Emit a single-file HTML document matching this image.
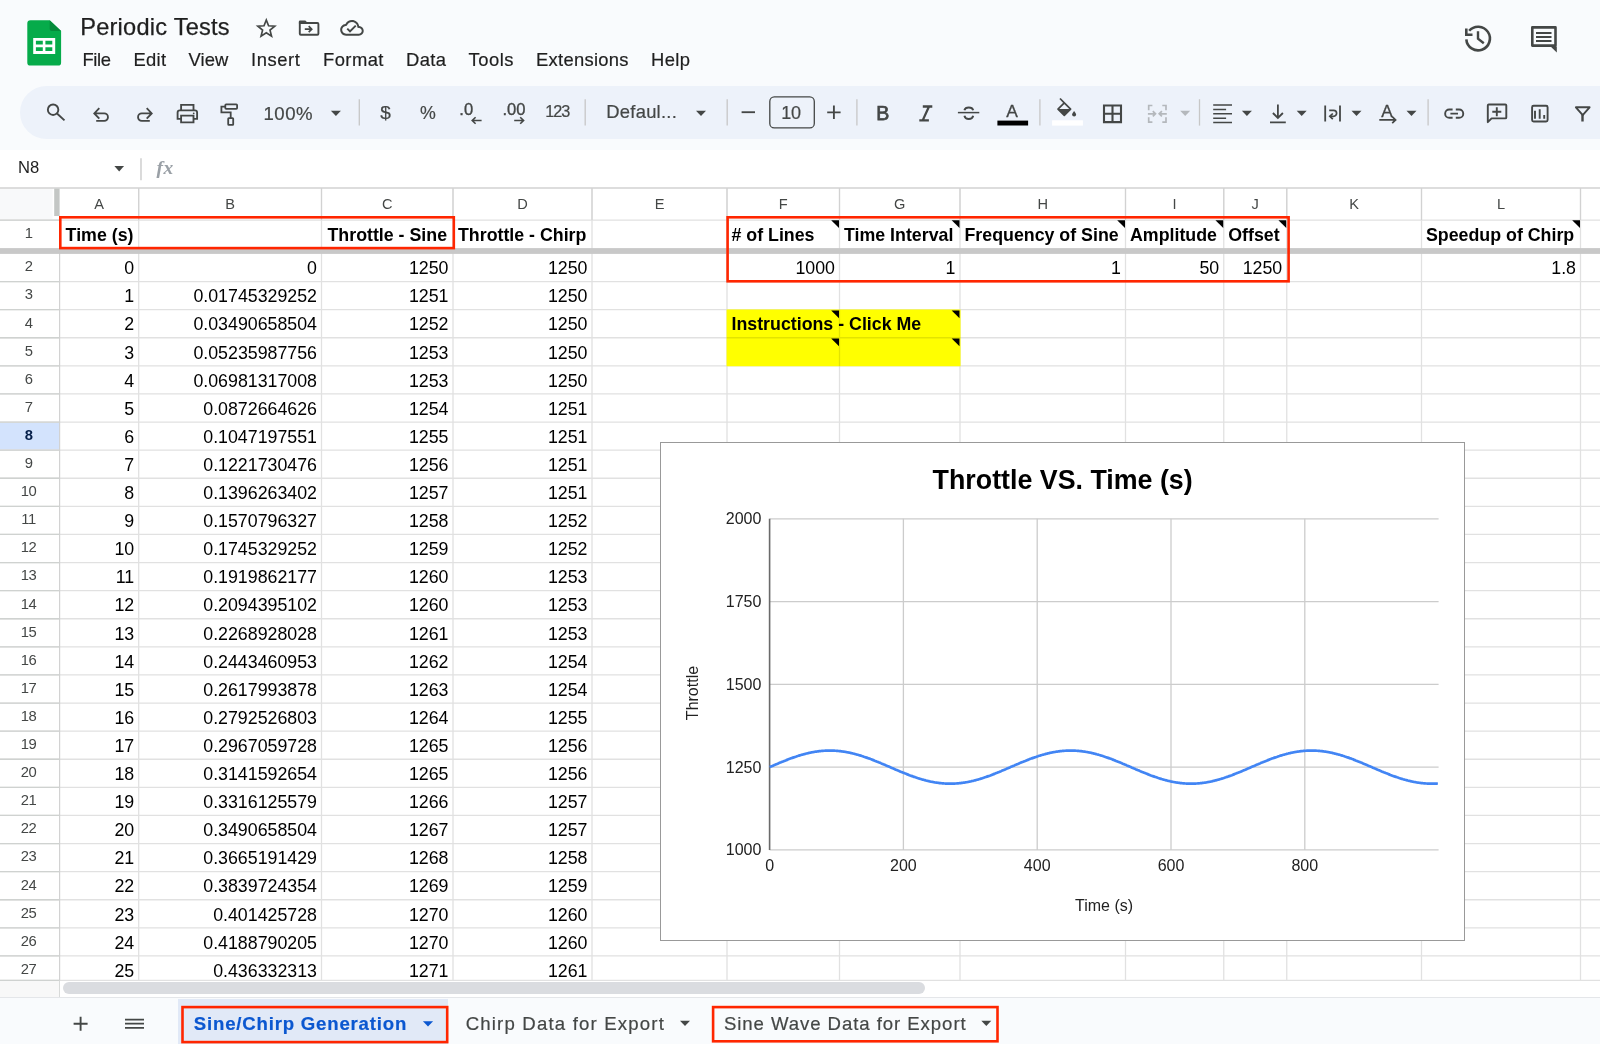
<!DOCTYPE html>
<html><head><meta charset="utf-8"><title>Periodic Tests</title>
<style>
html,body{margin:0;padding:0;overflow:hidden}
body{width:1600px;height:1044px;overflow:hidden;position:relative;background:#f9fbfd;
 font-family:"Liberation Sans",sans-serif;color:#1f1f1f}
.a{position:absolute;white-space:nowrap}
svg{position:absolute;left:0;top:0;overflow:visible}
.menu{position:absolute;top:49px;font-size:18.4px;line-height:22px;color:#1f1f1f;white-space:nowrap;-webkit-text-stroke:.2px #1f1f1f}
.ch{position:absolute;font-size:14.6px;line-height:18px;color:#444746;text-align:center;white-space:nowrap}
.rh{position:absolute;left:0.6px;width:56px;font-size:14.8px;letter-spacing:-.3px;line-height:18px;color:#444746;text-align:center;white-space:nowrap}
.c{position:absolute;font-size:17.8px;line-height:22px;color:#000;white-space:nowrap}
.r{text-align:right}
.b{font-weight:bold}
.tb{position:absolute;font-size:18.4px;line-height:22px;color:#444746;white-space:nowrap;-webkit-text-stroke:.2px #444746}
.ax{position:absolute;font-size:16px;line-height:18px;color:#222;white-space:nowrap}
.tab{position:absolute;top:1012.3px;font-size:18.6px;line-height:24px;color:#444746;white-space:nowrap;-webkit-text-stroke:.2px currentColor}
#root{position:absolute;left:0;top:0;width:1600px;height:1044px;overflow:hidden;will-change:transform}
</style></head><body><div id="root">
<svg width="1600" height="150" viewBox="0 0 1600 150">
<path d="M30.5 20.2h19.2l11.4 10.9v31.300a3.200 3.200 0 0 1-3.200 3.200H30.500a3.200 3.200 0 0 1-3.200-3.200V23.400a3.200 3.200 0 0 1 3.200-3.200z" fill="#06ab4a"/>
<path d="M49.700 20.200l11.400 10.900H51.700a2 2 0 0 1-2-2z" fill="#058a3a"/>
<path d="M33.200 38.100v15.800h22V38.100zm2.700 2.700h6.900v3.800h-6.900zm9.500 0h6.900v3.800h-6.900zm-9.500 6.400h6.900v3.800h-6.900zm9.500 0h6.900v3.800h-6.900z" fill="#fff" fill-rule="evenodd"/>
</svg>
<div class="a" style="left:80.2px;top:11.7px;font-size:23.6px;line-height:30px;color:#1f1f1f;-webkit-text-stroke:.25px #1f1f1f;letter-spacing:0.233px">Periodic Tests</div>
<div class="menu" style="left:82.50px;letter-spacing:-0.388px">File</div>
<div class="menu" style="left:133.50px;letter-spacing:0.277px">Edit</div>
<div class="menu" style="left:188.50px;letter-spacing:0.107px">View</div>
<div class="menu" style="left:251.00px;letter-spacing:0.587px">Insert</div>
<div class="menu" style="left:323.00px;letter-spacing:0.434px">Format</div>
<div class="menu" style="left:406.00px;letter-spacing:0.357px">Data</div>
<div class="menu" style="left:468.50px;letter-spacing:0.517px">Tools</div>
<div class="menu" style="left:536.00px;letter-spacing:0.278px">Extensions</div>
<div class="menu" style="left:651.00px;letter-spacing:0.400px">Help</div>
<div class="a" style="left:20px;top:85.5px;width:1700px;height:53.5px;border-radius:27px;background:#edf2fa"></div>
<div class="a" style="left:0;top:149.5px;width:1600px;height:38px;background:#fff"></div>
<div class="a" style="left:18px;top:158.2px;font-size:16.6px;line-height:20px;color:#1f1f1f">N8</div>
<svg width="1600" height="190" viewBox="0 0 1600 190">
<g fill="none" stroke="#444746" stroke-width="1.9" stroke-linejoin="miter">
<path d="M266.30 20.00L268.59 25.74L274.76 26.15L270.01 30.11L271.53 36.10L266.30 32.80L261.07 36.10L262.59 30.11L257.84 26.15L264.01 25.74z" stroke-width="1.7"/>
<path d="M299.8 22.2v11.600a1 1 0 0 0 1 1h16.600a1 1 0 0 0 1-1V24a1 1 0 0 0-1-1H299.8" stroke-width="1.9"/>
<path d="M298.85 23.6V21.7a1.200 1.200 0 0 1 1.200-1.200h5.300l2.400 2.600z" fill="#444746" stroke="none"/>
<path d="M304.8 29.2h6.600M308.700 26.200l3 3-3 3" stroke-width="1.700"/>
<g transform="translate(340.2 16.1) scale(0.98)" fill="#444746" stroke="none"><path d="M19.35 10.04C18.67 6.59 15.64 4 12 4 9.11 4 6.6 5.64 5.35 8.04 2.34 8.36 0 10.91 0 14c0 3.31 2.69 6 6 6h13c2.76 0 5-2.24 5-5 0-2.64-2.05-4.78-4.65-4.960zM19 18H6c-2.210 0-4-1.790-4-4 0-2.050 1.530-3.760 3.560-3.970l1.070-.110.500-.950C8.080 7.140 9.940 6 12 6c2.620 0 4.880 1.860 5.390 4.430l.300 1.500 1.530.110c1.560.100 2.780 1.410 2.780 2.960 0 1.650-1.350 3-3 3z"/><path d="M10 17l-3.500-3.500 1.410-1.410L10 14.170 15.180 9l1.410 1.410z"/></g>
<path d="M1469.19 30.76A11.8 11.8 0 1 1 1466.33 39.32" stroke-width="2.6"/>
<path d="M1466.300 28.600V34.800H1472.500" stroke-width="2.600"/>
<path d="M1478 31.300V38.700L1483.800 43.200" stroke-width="2.400"/>
<path d="M1532.3 27.400H1555.500V45.600H1532.300z" stroke-width="2.600" stroke-linejoin="round"/>
<path d="M1550.600 46.500H1556.800V52.400z" fill="#444746" stroke="none"/>
<path d="M1536 32.900H1551.500M1536 36.900H1551.500M1536 41H1551.500" stroke-width="2"/>
<circle cx="53.1" cy="109.7" r="5.25" stroke-width="1.9"/><path d="M57 113.500L64.500 120.400" stroke-width="1.900"/>
<path d="M99.300 108.200L94.300 113.400L99.300 118.600M94.600 113.400H104.200A3.750 3.750 0 0 1 104.200 120.900H96.200" stroke-width="1.850"/>
<path d="M146.700 108.200L151.700 113.400L146.700 118.600M151.400 113.400H141.800A3.750 3.750 0 0 0 141.800 120.900H149.800" stroke-width="1.850"/>
<path d="M181.1 110.400V104.900H193.500V110.400" stroke-width="1.850"/>
<path d="M181.100 118.900H177.600V112.600a2.200 2.200 0 0 1 2.200-2.200H194.900a2.200 2.200 0 0 1 2.200 2.200V118.900H193.500" stroke-width="1.850"/>
<path d="M181.100 115.600H193.500V122.400H181.100z" stroke-width="1.850"/>
<circle cx="193.700" cy="113.300" r="0.900" fill="#444746" stroke="none"/>
<rect x="225.300" y="104.400" width="11.800" height="4.500" rx="0.800" stroke-width="1.800"/>
<path d="M225.300 106.600H221.400V112.400H230.700V118.200" stroke-width="1.800"/>
<rect x="228.200" y="118.200" width="5" height="6.600" rx="0.600" stroke-width="1.800"/>
<path d="M741.600 112.200H755" stroke-width="1.850"/>
<path d="M827.200 112.300H840.600M833.900 105.600V119" stroke-width="1.850"/>
<rect x="769.800" y="96.900" width="44.500" height="31" rx="4.500" stroke-width="1.300"/>
<path d="M922.800 106.500H932.300M919.300 120.400H928.900M929 106.500L922.700 120.400" stroke-width="2.300"/>
<path d="M957.900 112.600H979.300" stroke-width="1.500"/>
<path d="M964.400 110.200A4.500 3.500 0 0 1 973.200 110.200" stroke-width="1.900"/>
<path d="M964.400 115.700A4.500 4.100 0 0 0 973.200 115.700" stroke-width="1.900"/>
<path d="M1104 105.500H1121V122.100H1104zM1112.500 105.500V122.100M1104 113.800H1121" stroke-width="2.100"/>
<path d="M1213.200 105.100H1232M1213.200 109.450H1226.100M1213.200 113.800H1232M1213.200 118.150H1226.100M1213.200 122.500H1232" stroke-width="1.500"/>
<path d="M1277.900 104.600V117.600M1272.900 113L1277.900 118L1282.900 113M1270 122.300H1285.800" stroke-width="1.800"/>
<path d="M1325.200 105.500V121.500M1340 105.500V121.500" stroke-width="1.800"/>
<path d="M1329.200 110.300H1333.600A3 3 0 0 1 1333.600 116.300H1330" stroke-width="1.700"/>
<path d="M1332.800 113.500L1329.800 116.300L1332.800 119.100" stroke-width="1.700"/>
<path d="M1379.300 119.900H1395.200M1392.200 116.600L1395.600 119.900L1392.200 123.200" stroke-width="1.700"/>
<path d="M1452.600 109.500H1449.300A4.150 4.150 0 0 0 1449.300 117.800H1452.600M1455.800 109.500H1459.100A4.150 4.150 0 0 1 1459.100 117.800H1455.800M1450.400 113.650H1458" stroke-width="1.900"/>
<path d="M1487.800 122.200V105.500a1 1 0 0 1 1-1H1505.300a1 1 0 0 1 1 1V117.400a1 1 0 0 1-1 1H1491.600z" stroke-width="1.900" stroke-linejoin="round"/>
<path d="M1492.300 111.700H1501.300M1496.800 107.200V116.200" stroke-width="1.900"/>
<rect x="1532.100" y="105.800" width="15.500" height="15.700" rx="1.500" stroke-width="1.900"/>
<path d="M1535 110.800V118.800M1539.700 109.200V118.800M1544.200 115.100V118.800" stroke-width="1.900"/>
<path d="M1575.900 107.300H1589.600L1582.700 115.200z" stroke-width="1.900" stroke-linejoin="round"/>
<path d="M1582.500 114.500V121.500" stroke-width="2.400"/>
</g>
<path d="M1060 98.500L1064.300 102.800" stroke="#444746" stroke-width="1.700" fill="none"/>
<path d="M1064.300 102.800L1070.600 109.100L1064.300 115.400L1058 109.100z" stroke="#444746" stroke-width="1.700" fill="none" stroke-linejoin="round"/>
<path d="M1058 109.100H1070.600L1064.300 115.400z" fill="#444746"/>
<path d="M1074.100 110.900c1.300 1.700 2 2.700 2 3.700a2 2 0 0 1-4 0c0-1 .700-2 2-3.700z" fill="#444746"/>
<rect x="1052.100" y="120.300" width="30.800" height="5.300" fill="#fff"/>
<rect x="997.400" y="120.600" width="30.700" height="4.900" fill="#000"/>
<g fill="none" stroke="#b4b8bc" stroke-width="1.700">
<path d="M1152.400 105.500H1148.700V110.300M1148.700 117.300V122.100H1152.400M1162.300 105.500H1166V110.300M1166 117.300V122.100H1162.300"/>
<path d="M1147.900 113.800H1155.300M1152.800 111.200L1155.500 113.800L1152.800 116.400M1166.800 113.800H1159.400M1161.900 111.200L1159.200 113.800L1161.900 116.400"/>
</g>
<path d="M330.90 110.80h10.0l-5.0 5.2z" fill="#444746"/>
<path d="M696.00 110.80h10.0l-5.0 5.2z" fill="#444746"/>
<path d="M1241.90 110.80h10.0l-5.0 5.2z" fill="#444746"/>
<path d="M1296.70 110.80h10.0l-5.0 5.2z" fill="#444746"/>
<path d="M1351.50 110.80h10.0l-5.0 5.2z" fill="#444746"/>
<path d="M1406.50 110.80h10.0l-5.0 5.2z" fill="#444746"/>
<path d="M1180.20 110.80h10.0l-5.0 5.2z" fill="#b4b8bc"/>
<path d="M114.35 166.10h9.7l-4.85 5.4z" fill="#444746"/>
<g stroke="#c7c7c7" stroke-width="1.300">
<path d="M359.3 99.200V125.600"/>
<path d="M585.2 99.200V125.600"/>
<path d="M727.2 99.200V125.600"/>
<path d="M856.9 99.200V125.600"/>
<path d="M1039.9 99.200V125.600"/>
<path d="M1199.5 99.200V125.600"/>
<path d="M1428.1 99.200V125.600"/>
<path d="M141 158.200V180.200"/>
</g>
<g fill="none" stroke="#444746" stroke-width="1.600">
<path d="M472.200 120.500H481.600M475.600 117.200L472.200 120.500L475.600 123.800"/>
<path d="M514.200 120.500H523.600M520.200 117.200L523.600 120.500L520.200 123.800"/>
</g>
</svg>
<div class="tb" style="left:263.5px;top:103px;font-size:18.6px;letter-spacing:.5px">100%</div>
<div class="tb" style="left:380.2px;top:102.0px;font-size:19px;">$</div>
<div class="tb" style="left:419.9px;top:101.9px;font-size:17.8px;">%</div>
<div class="tb" style="left:459.3px;top:98.9px;font-size:16.6px;-webkit-text-stroke:.35px #444746">.0</div>
<div class="tb" style="left:502.4px;top:98.9px;font-size:16.6px;-webkit-text-stroke:.35px #444746">.00</div>
<div class="tb" style="left:545.3px;top:100.3px;font-size:16.3px;letter-spacing:-1.05px">123</div>
<div class="tb" style="left:606.3px;top:100.5px;font-size:18.4px;letter-spacing:.25px">Defaul...</div>
<div class="tb" style="left:781.3px;top:102.1px;font-size:18px;letter-spacing:-.3px">10</div>
<div class="tb" style="left:876.3px;top:102.3px;font-size:19.6px;-webkit-text-stroke:.75px #444746">B</div>
<div class="tb" style="left:1006.3px;top:99.9px;font-size:17.4px;-webkit-text-stroke:.3px #444746">A</div>
<div class="tb" style="left:1381.3px;top:99.7px;font-size:17.2px;-webkit-text-stroke:.3px #444746">A</div>
<div class="a" style="left:156.500px;top:156.300px;font-family:'Liberation Serif',serif;font-style:italic;font-weight:bold;font-size:19.500px;line-height:24px;color:#9aa0a6;letter-spacing:.6px">fx</div>
<div class="a" style="left:0;top:188.0px;width:1600px;height:809.5px;background:#fff"></div>
<svg width="1600" height="1044" viewBox="0 0 1600 1044">
<rect x="0" y="188.0" width="52.6" height="30.899999999999995" fill="#f8f9fa"/>
<rect x="0" y="422.55" width="59" height="27.1" fill="#d3e3fd"/>
<g stroke="#e1e1e1" stroke-width="1.3" fill="none">
<path d="M0 188.0H1600"/>
<path d="M0 220.10H1600"/>
<path d="M0 281.55H1600"/>
<path d="M0 309.65H1600"/>
<path d="M0 337.75H1600"/>
<path d="M0 365.85H1600"/>
<path d="M0 393.95H1600"/>
<path d="M0 422.05H1600"/>
<path d="M0 450.15H1600"/>
<path d="M0 478.25H1600"/>
<path d="M0 506.35H1600"/>
<path d="M0 534.45H1600"/>
<path d="M0 562.55H1600"/>
<path d="M0 590.65H1600"/>
<path d="M0 618.75H1600"/>
<path d="M0 646.85H1600"/>
<path d="M0 674.95H1600"/>
<path d="M0 703.05H1600"/>
<path d="M0 731.15H1600"/>
<path d="M0 759.25H1600"/>
<path d="M0 787.35H1600"/>
<path d="M0 815.45H1600"/>
<path d="M0 843.55H1600"/>
<path d="M0 871.65H1600"/>
<path d="M0 899.75H1600"/>
<path d="M0 927.85H1600"/>
<path d="M0 955.95H1600"/>
<path d="M0 980.30H1600"/>
<path d="M138.7 188.0V980.3"/>
<path d="M321.5 188.0V980.3"/>
<path d="M453 188.0V980.3"/>
<path d="M592 188.0V980.3"/>
<path d="M727 188.0V980.3"/>
<path d="M839.5 188.0V980.3"/>
<path d="M960 188.0V980.3"/>
<path d="M1125.5 188.0V980.3"/>
<path d="M1223.75 188.0V980.3"/>
<path d="M1286.75 188.0V980.3"/>
<path d="M1421.5 188.0V980.3"/>
<path d="M1580.5 188.0V980.3"/>
</g>
<rect x="726.55" y="309.45" width="234.00" height="56.80" fill="#ffff00"/>
<path d="M726.55 337.75H960.55M839.5 309.45V366.25" stroke="#000" stroke-opacity=".11" stroke-width="1.300" fill="none"/>
<g stroke="#d2d2d2" stroke-width="1.2" fill="none">
<path d="M0 188.0H1600"/>
<path d="M138.7 188.0V220.1"/>
<path d="M321.5 188.0V220.1"/>
<path d="M453 188.0V220.1"/>
<path d="M592 188.0V220.1"/>
<path d="M727 188.0V220.1"/>
<path d="M839.5 188.0V220.1"/>
<path d="M960 188.0V220.1"/>
<path d="M1125.5 188.0V220.1"/>
<path d="M1223.75 188.0V220.1"/>
<path d="M1286.75 188.0V220.1"/>
<path d="M1421.5 188.0V220.1"/>
<path d="M1580.5 188.0V220.1"/>
<path d="M59.6 220.1V980.3"/>
</g>
<g stroke="#cfd2d0" stroke-width="1.3" fill="none">
<path d="M0 220.10H59.6"/>
<path d="M0 281.55H59.6"/>
<path d="M0 309.65H59.6"/>
<path d="M0 337.75H59.6"/>
<path d="M0 365.85H59.6"/>
<path d="M0 393.95H59.6"/>
<path d="M0 422.05H59.6"/>
<path d="M0 450.15H59.6"/>
<path d="M0 478.25H59.6"/>
<path d="M0 506.35H59.6"/>
<path d="M0 534.45H59.6"/>
<path d="M0 562.55H59.6"/>
<path d="M0 590.65H59.6"/>
<path d="M0 618.75H59.6"/>
<path d="M0 646.85H59.6"/>
<path d="M0 674.95H59.6"/>
<path d="M0 703.05H59.6"/>
<path d="M0 731.15H59.6"/>
<path d="M0 759.25H59.6"/>
<path d="M0 787.35H59.6"/>
<path d="M0 815.45H59.6"/>
<path d="M0 843.55H59.6"/>
<path d="M0 871.65H59.6"/>
<path d="M0 899.75H59.6"/>
<path d="M0 927.85H59.6"/>
<path d="M0 955.95H59.6"/>
<path d="M0 980.30H59.6"/>
</g>
<rect x="54.2" y="188.6" width="5.4" height="27.4" fill="#c4c7c5"/>
<rect x="0" y="248.1" width="1600" height="5.8" fill="#c8c8c8"/>
</svg>
<div class="ch" style="left:59.6px;width:79.1px;top:194.5px">A</div>
<div class="ch" style="left:138.7px;width:182.8px;top:194.5px">B</div>
<div class="ch" style="left:321.5px;width:131.5px;top:194.5px">C</div>
<div class="ch" style="left:453px;width:139px;top:194.5px">D</div>
<div class="ch" style="left:592px;width:135px;top:194.5px">E</div>
<div class="ch" style="left:727px;width:112.5px;top:194.5px">F</div>
<div class="ch" style="left:839.5px;width:120.5px;top:194.5px">G</div>
<div class="ch" style="left:960px;width:165.5px;top:194.5px">H</div>
<div class="ch" style="left:1125.5px;width:98.25px;top:194.5px">I</div>
<div class="ch" style="left:1223.75px;width:63.0px;top:194.5px">J</div>
<div class="ch" style="left:1286.75px;width:134.75px;top:194.5px">K</div>
<div class="ch" style="left:1421.5px;width:159.0px;top:194.5px">L</div>
<div class="rh" style="top:223.60px">1</div>
<div class="rh" style="top:257.32px">2</div>
<div class="rh" style="top:285.40px">3</div>
<div class="rh" style="top:313.50px">4</div>
<div class="rh" style="top:341.60px">5</div>
<div class="rh" style="top:369.70px">6</div>
<div class="rh" style="top:397.80px">7</div>
<div class="rh" style="top:425.90px;font-weight:bold;color:#041e49">8</div>
<div class="rh" style="top:454.00px">9</div>
<div class="rh" style="top:482.10px">10</div>
<div class="rh" style="top:510.20px">11</div>
<div class="rh" style="top:538.30px">12</div>
<div class="rh" style="top:566.40px">13</div>
<div class="rh" style="top:594.50px">14</div>
<div class="rh" style="top:622.60px">15</div>
<div class="rh" style="top:650.70px">16</div>
<div class="rh" style="top:678.80px">17</div>
<div class="rh" style="top:706.90px">18</div>
<div class="rh" style="top:735.00px">19</div>
<div class="rh" style="top:763.10px">20</div>
<div class="rh" style="top:791.20px">21</div>
<div class="rh" style="top:819.30px">22</div>
<div class="rh" style="top:847.40px">23</div>
<div class="rh" style="top:875.50px">24</div>
<div class="rh" style="top:903.60px">25</div>
<div class="rh" style="top:931.70px">26</div>
<div class="rh" style="top:959.80px">27</div>
<div class="c b" style="left:65.60px;top:224.20px">Time (s)</div>
<div class="c b" style="left:327.50px;top:224.20px">Throttle - Sine</div>
<div class="c b" style="left:458.00px;top:224.20px">Throttle - Chirp</div>
<div class="c b" style="left:731.50px;top:224.20px"># of Lines</div>
<div class="c b" style="left:844.00px;top:224.20px">Time Interval</div>
<div class="c b" style="left:964.50px;top:224.20px">Frequency of Sine</div>
<div class="c b" style="left:1130.00px;top:224.20px">Amplitude</div>
<div class="c b" style="left:1228.25px;top:224.20px">Offset</div>
<div class="c b" style="left:1426.00px;top:224.20px">Speedup of Chirp</div>
<div class="c r" style="right:765.00px;top:257.25px">1000</div>
<div class="c r" style="right:644.50px;top:257.25px">1</div>
<div class="c r" style="right:479.00px;top:257.25px">1</div>
<div class="c r" style="right:380.75px;top:257.25px">50</div>
<div class="c r" style="right:317.75px;top:257.25px">1250</div>
<div class="c r" style="right:24.00px;top:257.25px">1.8</div>
<div class="c b" style="left:731.50px;top:313.45px">Instructions - Click Me</div>
<div class="c r" style="right:1465.80px;top:257.25px">0</div>
<div class="c r" style="right:1283.00px;top:257.25px">0</div>
<div class="c r" style="right:1151.50px;top:257.25px">1250</div>
<div class="c r" style="right:1012.50px;top:257.25px">1250</div>
<div class="c r" style="right:1465.80px;top:285.35px">1</div>
<div class="c r" style="right:1283.00px;top:285.35px">0.01745329252</div>
<div class="c r" style="right:1151.50px;top:285.35px">1251</div>
<div class="c r" style="right:1012.50px;top:285.35px">1250</div>
<div class="c r" style="right:1465.80px;top:313.45px">2</div>
<div class="c r" style="right:1283.00px;top:313.45px">0.03490658504</div>
<div class="c r" style="right:1151.50px;top:313.45px">1252</div>
<div class="c r" style="right:1012.50px;top:313.45px">1250</div>
<div class="c r" style="right:1465.80px;top:341.55px">3</div>
<div class="c r" style="right:1283.00px;top:341.55px">0.05235987756</div>
<div class="c r" style="right:1151.50px;top:341.55px">1253</div>
<div class="c r" style="right:1012.50px;top:341.55px">1250</div>
<div class="c r" style="right:1465.80px;top:369.65px">4</div>
<div class="c r" style="right:1283.00px;top:369.65px">0.06981317008</div>
<div class="c r" style="right:1151.50px;top:369.65px">1253</div>
<div class="c r" style="right:1012.50px;top:369.65px">1250</div>
<div class="c r" style="right:1465.80px;top:397.75px">5</div>
<div class="c r" style="right:1283.00px;top:397.75px">0.0872664626</div>
<div class="c r" style="right:1151.50px;top:397.75px">1254</div>
<div class="c r" style="right:1012.50px;top:397.75px">1251</div>
<div class="c r" style="right:1465.80px;top:425.85px">6</div>
<div class="c r" style="right:1283.00px;top:425.85px">0.1047197551</div>
<div class="c r" style="right:1151.50px;top:425.85px">1255</div>
<div class="c r" style="right:1012.50px;top:425.85px">1251</div>
<div class="c r" style="right:1465.80px;top:453.95px">7</div>
<div class="c r" style="right:1283.00px;top:453.95px">0.1221730476</div>
<div class="c r" style="right:1151.50px;top:453.95px">1256</div>
<div class="c r" style="right:1012.50px;top:453.95px">1251</div>
<div class="c r" style="right:1465.80px;top:482.05px">8</div>
<div class="c r" style="right:1283.00px;top:482.05px">0.1396263402</div>
<div class="c r" style="right:1151.50px;top:482.05px">1257</div>
<div class="c r" style="right:1012.50px;top:482.05px">1251</div>
<div class="c r" style="right:1465.80px;top:510.15px">9</div>
<div class="c r" style="right:1283.00px;top:510.15px">0.1570796327</div>
<div class="c r" style="right:1151.50px;top:510.15px">1258</div>
<div class="c r" style="right:1012.50px;top:510.15px">1252</div>
<div class="c r" style="right:1465.80px;top:538.25px">10</div>
<div class="c r" style="right:1283.00px;top:538.25px">0.1745329252</div>
<div class="c r" style="right:1151.50px;top:538.25px">1259</div>
<div class="c r" style="right:1012.50px;top:538.25px">1252</div>
<div class="c r" style="right:1465.80px;top:566.35px">11</div>
<div class="c r" style="right:1283.00px;top:566.35px">0.1919862177</div>
<div class="c r" style="right:1151.50px;top:566.35px">1260</div>
<div class="c r" style="right:1012.50px;top:566.35px">1253</div>
<div class="c r" style="right:1465.80px;top:594.45px">12</div>
<div class="c r" style="right:1283.00px;top:594.45px">0.2094395102</div>
<div class="c r" style="right:1151.50px;top:594.45px">1260</div>
<div class="c r" style="right:1012.50px;top:594.45px">1253</div>
<div class="c r" style="right:1465.80px;top:622.55px">13</div>
<div class="c r" style="right:1283.00px;top:622.55px">0.2268928028</div>
<div class="c r" style="right:1151.50px;top:622.55px">1261</div>
<div class="c r" style="right:1012.50px;top:622.55px">1253</div>
<div class="c r" style="right:1465.80px;top:650.65px">14</div>
<div class="c r" style="right:1283.00px;top:650.65px">0.2443460953</div>
<div class="c r" style="right:1151.50px;top:650.65px">1262</div>
<div class="c r" style="right:1012.50px;top:650.65px">1254</div>
<div class="c r" style="right:1465.80px;top:678.75px">15</div>
<div class="c r" style="right:1283.00px;top:678.75px">0.2617993878</div>
<div class="c r" style="right:1151.50px;top:678.75px">1263</div>
<div class="c r" style="right:1012.50px;top:678.75px">1254</div>
<div class="c r" style="right:1465.80px;top:706.85px">16</div>
<div class="c r" style="right:1283.00px;top:706.85px">0.2792526803</div>
<div class="c r" style="right:1151.50px;top:706.85px">1264</div>
<div class="c r" style="right:1012.50px;top:706.85px">1255</div>
<div class="c r" style="right:1465.80px;top:734.95px">17</div>
<div class="c r" style="right:1283.00px;top:734.95px">0.2967059728</div>
<div class="c r" style="right:1151.50px;top:734.95px">1265</div>
<div class="c r" style="right:1012.50px;top:734.95px">1256</div>
<div class="c r" style="right:1465.80px;top:763.05px">18</div>
<div class="c r" style="right:1283.00px;top:763.05px">0.3141592654</div>
<div class="c r" style="right:1151.50px;top:763.05px">1265</div>
<div class="c r" style="right:1012.50px;top:763.05px">1256</div>
<div class="c r" style="right:1465.80px;top:791.15px">19</div>
<div class="c r" style="right:1283.00px;top:791.15px">0.3316125579</div>
<div class="c r" style="right:1151.50px;top:791.15px">1266</div>
<div class="c r" style="right:1012.50px;top:791.15px">1257</div>
<div class="c r" style="right:1465.80px;top:819.25px">20</div>
<div class="c r" style="right:1283.00px;top:819.25px">0.3490658504</div>
<div class="c r" style="right:1151.50px;top:819.25px">1267</div>
<div class="c r" style="right:1012.50px;top:819.25px">1257</div>
<div class="c r" style="right:1465.80px;top:847.35px">21</div>
<div class="c r" style="right:1283.00px;top:847.35px">0.3665191429</div>
<div class="c r" style="right:1151.50px;top:847.35px">1268</div>
<div class="c r" style="right:1012.50px;top:847.35px">1258</div>
<div class="c r" style="right:1465.80px;top:875.45px">22</div>
<div class="c r" style="right:1283.00px;top:875.45px">0.3839724354</div>
<div class="c r" style="right:1151.50px;top:875.45px">1269</div>
<div class="c r" style="right:1012.50px;top:875.45px">1259</div>
<div class="c r" style="right:1465.80px;top:903.55px">23</div>
<div class="c r" style="right:1283.00px;top:903.55px">0.401425728</div>
<div class="c r" style="right:1151.50px;top:903.55px">1270</div>
<div class="c r" style="right:1012.50px;top:903.55px">1260</div>
<div class="c r" style="right:1465.80px;top:931.65px">24</div>
<div class="c r" style="right:1283.00px;top:931.65px">0.4188790205</div>
<div class="c r" style="right:1151.50px;top:931.65px">1270</div>
<div class="c r" style="right:1012.50px;top:931.65px">1260</div>
<div class="c r" style="right:1465.80px;top:959.75px">25</div>
<div class="c r" style="right:1283.00px;top:959.75px">0.436332313</div>
<div class="c r" style="right:1151.50px;top:959.75px">1271</div>
<div class="c r" style="right:1012.50px;top:959.75px">1261</div>
<svg width="1600" height="1044" viewBox="0 0 1600 1044">
<g fill="none" stroke="#ff2600" stroke-width="2.6">
<rect x="60.3" y="217.3" width="393.5" height="30.8"/>
<rect x="727.6" y="217.3" width="561" height="64"/>
</g>
<path d="M831.20 220.30H839.00V228.10z" fill="#000"/>
<path d="M951.70 220.30H959.50V228.10z" fill="#000"/>
<path d="M1117.20 220.30H1125.00V228.10z" fill="#000"/>
<path d="M1215.45 220.30H1223.25V228.10z" fill="#000"/>
<path d="M1278.45 220.30H1286.25V228.10z" fill="#000"/>
<path d="M1572.20 220.30H1580.00V228.10z" fill="#000"/>
<path d="M831.20 310.45H839.00V318.25z" fill="#000"/>
<path d="M831.20 338.55H839.00V346.35z" fill="#000"/>
<path d="M951.70 310.45H959.50V318.25z" fill="#000"/>
<path d="M951.70 338.55H959.50V346.35z" fill="#000"/>
</svg>
<div class="a" style="left:660px;top:442px;width:803.3px;height:497.20000000000005px;background:#fff;border:1.4px solid #999"></div>
<svg width="1600" height="1044" viewBox="0 0 1600 1044">
<g stroke="#cccccc" stroke-width="1.3" fill="none">
<path d="M769.6 518.80H1438.6"/>
<path d="M769.6 601.57H1438.6"/>
<path d="M769.6 684.35H1438.6"/>
<path d="M769.6 767.12H1438.6"/>
<path d="M769.6 849.90H1438.6"/>
<path d="M903.40 518.8V849.9"/>
<path d="M1037.20 518.8V849.9"/>
<path d="M1171.00 518.8V849.9"/>
<path d="M1304.80 518.8V849.9"/>
</g>
<path d="M769.6 518.8V849.9" stroke="#6a6a6a" stroke-width="1.6" fill="none"/>
<path d="M769.6 767.12L770.3 766.84L770.9 766.55L771.6 766.26L772.3 765.97L772.9 765.68L773.6 765.39L774.3 765.11L775.0 764.82L775.6 764.54L776.3 764.25L777.0 763.97L777.6 763.68L778.3 763.40L779.0 763.12L779.6 762.84L780.3 762.56L781.0 762.28L781.6 762.01L782.3 761.74L783.0 761.46L783.6 761.19L784.3 760.92L785.0 760.66L785.7 760.39L786.3 760.13L787.0 759.87L787.7 759.61L788.3 759.35L789.0 759.10L789.7 758.85L790.3 758.60L791.0 758.35L791.7 758.11L792.3 757.87L793.0 757.63L793.7 757.39L794.4 757.16L795.0 756.93L795.7 756.71L796.4 756.48L797.0 756.26L797.7 756.05L798.4 755.83L799.0 755.62L799.7 755.42L800.4 755.22L801.0 755.02L801.7 754.82L802.4 754.63L803.1 754.44L803.7 754.26L804.4 754.08L805.1 753.90L805.7 753.73L806.4 753.56L807.1 753.40L807.7 753.24L808.4 753.09L809.1 752.93L809.7 752.79L810.4 752.65L811.1 752.51L811.7 752.37L812.4 752.25L813.1 752.12L813.8 752.00L814.4 751.89L815.1 751.78L815.8 751.67L816.4 751.57L817.1 751.47L817.8 751.38L818.4 751.29L819.1 751.21L819.8 751.13L820.4 751.06L821.1 750.99L821.8 750.93L822.5 750.87L823.1 750.82L823.8 750.77L824.5 750.73L825.1 750.69L825.8 750.66L826.5 750.63L827.1 750.61L827.8 750.59L828.5 750.58L829.1 750.57L829.8 750.57L830.5 750.57L831.1 750.58L831.8 750.59L832.5 750.61L833.2 750.63L833.8 750.66L834.5 750.69L835.2 750.73L835.8 750.77L836.5 750.82L837.2 750.87L837.8 750.93L838.5 750.99L839.2 751.06L839.8 751.13L840.5 751.21L841.2 751.29L841.9 751.38L842.5 751.47L843.2 751.57L843.9 751.67L844.5 751.78L845.2 751.89L845.9 752.00L846.5 752.12L847.2 752.25L847.9 752.37L848.5 752.51L849.2 752.65L849.9 752.79L850.5 752.93L851.2 753.09L851.9 753.24L852.6 753.40L853.2 753.56L853.9 753.73L854.6 753.90L855.2 754.08L855.9 754.26L856.6 754.44L857.2 754.63L857.9 754.82L858.6 755.02L859.2 755.22L859.9 755.42L860.6 755.62L861.3 755.83L861.9 756.05L862.6 756.26L863.3 756.48L863.9 756.71L864.6 756.93L865.3 757.16L865.9 757.39L866.6 757.63L867.3 757.87L867.9 758.11L868.6 758.35L869.3 758.60L870.0 758.85L870.6 759.10L871.3 759.35L872.0 759.61L872.6 759.87L873.3 760.13L874.0 760.39L874.6 760.66L875.3 760.92L876.0 761.19L876.6 761.46L877.3 761.74L878.0 762.01L878.6 762.28L879.3 762.56L880.0 762.84L880.7 763.12L881.3 763.40L882.0 763.68L882.7 763.97L883.3 764.25L884.0 764.54L884.7 764.82L885.3 765.11L886.0 765.39L886.7 765.68L887.3 765.97L888.0 766.26L888.7 766.55L889.4 766.84L890.0 767.12L890.7 767.41L891.4 767.70L892.0 767.99L892.7 768.28L893.4 768.57L894.0 768.86L894.7 769.14L895.4 769.43L896.0 769.71L896.7 770.00L897.4 770.28L898.0 770.57L898.7 770.85L899.4 771.13L900.1 771.41L900.7 771.69L901.4 771.97L902.1 772.24L902.7 772.51L903.4 772.79L904.1 773.06L904.7 773.33L905.4 773.59L906.1 773.86L906.7 774.12L907.4 774.38L908.1 774.64L908.8 774.90L909.4 775.15L910.1 775.40L910.8 775.65L911.4 775.90L912.1 776.14L912.8 776.38L913.4 776.62L914.1 776.86L914.8 777.09L915.4 777.32L916.1 777.54L916.8 777.77L917.4 777.99L918.1 778.20L918.8 778.42L919.5 778.63L920.1 778.83L920.8 779.03L921.5 779.23L922.1 779.43L922.8 779.62L923.5 779.81L924.1 779.99L924.8 780.17L925.5 780.35L926.1 780.52L926.8 780.69L927.5 780.85L928.2 781.01L928.8 781.16L929.5 781.32L930.2 781.46L930.8 781.60L931.5 781.74L932.2 781.88L932.8 782.00L933.5 782.13L934.2 782.25L934.8 782.36L935.5 782.47L936.2 782.58L936.9 782.68L937.5 782.78L938.2 782.87L938.9 782.96L939.5 783.04L940.2 783.12L940.9 783.19L941.5 783.26L942.2 783.32L942.9 783.38L943.5 783.43L944.2 783.48L944.9 783.52L945.5 783.56L946.2 783.59L946.9 783.62L947.6 783.64L948.2 783.66L948.9 783.67L949.6 783.68L950.2 783.68L950.9 783.68L951.6 783.67L952.2 783.66L952.9 783.64L953.6 783.62L954.2 783.59L954.9 783.56L955.6 783.52L956.3 783.48L956.9 783.43L957.6 783.38L958.3 783.32L958.9 783.26L959.6 783.19L960.3 783.12L960.9 783.04L961.6 782.96L962.3 782.87L962.9 782.78L963.6 782.68L964.3 782.58L964.9 782.47L965.6 782.36L966.3 782.25L967.0 782.13L967.6 782.00L968.3 781.88L969.0 781.74L969.6 781.60L970.3 781.46L971.0 781.32L971.6 781.16L972.3 781.01L973.0 780.85L973.6 780.69L974.3 780.52L975.0 780.35L975.7 780.17L976.3 779.99L977.0 779.81L977.7 779.62L978.3 779.43L979.0 779.23L979.7 779.03L980.3 778.83L981.0 778.63L981.7 778.42L982.3 778.20L983.0 777.99L983.7 777.77L984.3 777.54L985.0 777.32L985.7 777.09L986.4 776.86L987.0 776.62L987.7 776.38L988.4 776.14L989.0 775.90L989.7 775.65L990.4 775.40L991.0 775.15L991.7 774.90L992.4 774.64L993.0 774.38L993.7 774.12L994.4 773.86L995.1 773.59L995.7 773.33L996.4 773.06L997.1 772.79L997.7 772.51L998.4 772.24L999.1 771.97L999.7 771.69L1000.4 771.41L1001.1 771.13L1001.7 770.85L1002.4 770.57L1003.1 770.28L1003.8 770.00L1004.4 769.71L1005.1 769.43L1005.8 769.14L1006.4 768.86L1007.1 768.57L1007.8 768.28L1008.4 767.99L1009.1 767.70L1009.8 767.41L1010.4 767.12L1011.1 766.84L1011.8 766.55L1012.4 766.26L1013.1 765.97L1013.8 765.68L1014.5 765.39L1015.1 765.11L1015.8 764.82L1016.5 764.54L1017.1 764.25L1017.8 763.97L1018.5 763.68L1019.1 763.40L1019.8 763.12L1020.5 762.84L1021.1 762.56L1021.8 762.28L1022.5 762.01L1023.2 761.74L1023.8 761.46L1024.5 761.19L1025.2 760.92L1025.8 760.66L1026.5 760.39L1027.2 760.13L1027.8 759.87L1028.5 759.61L1029.2 759.35L1029.8 759.10L1030.5 758.85L1031.2 758.60L1031.8 758.35L1032.5 758.11L1033.2 757.87L1033.9 757.63L1034.5 757.39L1035.2 757.16L1035.9 756.93L1036.5 756.71L1037.2 756.48L1037.9 756.26L1038.5 756.05L1039.2 755.83L1039.9 755.62L1040.5 755.42L1041.2 755.22L1041.9 755.02L1042.6 754.82L1043.2 754.63L1043.9 754.44L1044.6 754.26L1045.2 754.08L1045.9 753.90L1046.6 753.73L1047.2 753.56L1047.9 753.40L1048.6 753.24L1049.2 753.09L1049.9 752.93L1050.6 752.79L1051.2 752.65L1051.9 752.51L1052.6 752.37L1053.3 752.25L1053.9 752.12L1054.6 752.00L1055.3 751.89L1055.9 751.78L1056.6 751.67L1057.3 751.57L1057.9 751.47L1058.6 751.38L1059.3 751.29L1059.9 751.21L1060.6 751.13L1061.3 751.06L1062.0 750.99L1062.6 750.93L1063.3 750.87L1064.0 750.82L1064.6 750.77L1065.3 750.73L1066.0 750.69L1066.6 750.66L1067.3 750.63L1068.0 750.61L1068.6 750.59L1069.3 750.58L1070.0 750.57L1070.7 750.57L1071.3 750.57L1072.0 750.58L1072.7 750.59L1073.3 750.61L1074.0 750.63L1074.7 750.66L1075.3 750.69L1076.0 750.73L1076.7 750.77L1077.3 750.82L1078.0 750.87L1078.7 750.93L1079.3 750.99L1080.0 751.06L1080.7 751.13L1081.4 751.21L1082.0 751.29L1082.7 751.38L1083.4 751.47L1084.0 751.57L1084.7 751.67L1085.4 751.78L1086.0 751.89L1086.7 752.00L1087.4 752.12L1088.0 752.25L1088.7 752.37L1089.4 752.51L1090.1 752.65L1090.7 752.79L1091.4 752.93L1092.1 753.09L1092.7 753.24L1093.4 753.40L1094.1 753.56L1094.7 753.73L1095.4 753.90L1096.1 754.08L1096.7 754.26L1097.4 754.44L1098.1 754.63L1098.7 754.82L1099.4 755.02L1100.1 755.22L1100.8 755.42L1101.4 755.62L1102.1 755.83L1102.8 756.05L1103.4 756.26L1104.1 756.48L1104.8 756.71L1105.4 756.93L1106.1 757.16L1106.8 757.39L1107.4 757.63L1108.1 757.87L1108.8 758.11L1109.5 758.35L1110.1 758.60L1110.8 758.85L1111.5 759.10L1112.1 759.35L1112.8 759.61L1113.5 759.87L1114.1 760.13L1114.8 760.39L1115.5 760.66L1116.1 760.92L1116.8 761.19L1117.5 761.46L1118.1 761.74L1118.8 762.01L1119.5 762.28L1120.2 762.56L1120.8 762.84L1121.5 763.12L1122.2 763.40L1122.8 763.68L1123.5 763.97L1124.2 764.25L1124.8 764.54L1125.5 764.82L1126.2 765.11L1126.8 765.39L1127.5 765.68L1128.2 765.97L1128.9 766.26L1129.5 766.55L1130.2 766.84L1130.9 767.12L1131.5 767.41L1132.2 767.70L1132.9 767.99L1133.5 768.28L1134.2 768.57L1134.9 768.86L1135.5 769.14L1136.2 769.43L1136.9 769.71L1137.5 770.00L1138.2 770.28L1138.9 770.57L1139.6 770.85L1140.2 771.13L1140.9 771.41L1141.6 771.69L1142.2 771.97L1142.9 772.24L1143.6 772.51L1144.2 772.79L1144.9 773.06L1145.6 773.33L1146.2 773.59L1146.9 773.86L1147.6 774.12L1148.3 774.38L1148.9 774.64L1149.6 774.90L1150.3 775.15L1150.9 775.40L1151.6 775.65L1152.3 775.90L1152.9 776.14L1153.6 776.38L1154.3 776.62L1154.9 776.86L1155.6 777.09L1156.3 777.32L1157.0 777.54L1157.6 777.77L1158.3 777.99L1159.0 778.20L1159.6 778.42L1160.3 778.63L1161.0 778.83L1161.6 779.03L1162.3 779.23L1163.0 779.43L1163.6 779.62L1164.3 779.81L1165.0 779.99L1165.6 780.17L1166.3 780.35L1167.0 780.52L1167.7 780.69L1168.3 780.85L1169.0 781.01L1169.7 781.16L1170.3 781.32L1171.0 781.46L1171.7 781.60L1172.3 781.74L1173.0 781.88L1173.7 782.00L1174.3 782.13L1175.0 782.25L1175.7 782.36L1176.4 782.47L1177.0 782.58L1177.7 782.68L1178.4 782.78L1179.0 782.87L1179.7 782.96L1180.4 783.04L1181.0 783.12L1181.7 783.19L1182.4 783.26L1183.0 783.32L1183.7 783.38L1184.4 783.43L1185.0 783.48L1185.7 783.52L1186.4 783.56L1187.1 783.59L1187.7 783.62L1188.4 783.64L1189.1 783.66L1189.7 783.67L1190.4 783.68L1191.1 783.68L1191.7 783.68L1192.4 783.67L1193.1 783.66L1193.7 783.64L1194.4 783.62L1195.1 783.59L1195.8 783.56L1196.4 783.52L1197.1 783.48L1197.8 783.43L1198.4 783.38L1199.1 783.32L1199.8 783.26L1200.4 783.19L1201.1 783.12L1201.8 783.04L1202.4 782.96L1203.1 782.87L1203.8 782.78L1204.5 782.68L1205.1 782.58L1205.8 782.47L1206.5 782.36L1207.1 782.25L1207.8 782.13L1208.5 782.00L1209.1 781.88L1209.8 781.74L1210.5 781.60L1211.1 781.46L1211.8 781.32L1212.5 781.16L1213.1 781.01L1213.8 780.85L1214.5 780.69L1215.2 780.52L1215.8 780.35L1216.5 780.17L1217.2 779.99L1217.8 779.81L1218.5 779.62L1219.2 779.43L1219.8 779.23L1220.5 779.03L1221.2 778.83L1221.8 778.63L1222.5 778.42L1223.2 778.20L1223.9 777.99L1224.5 777.77L1225.2 777.54L1225.9 777.32L1226.5 777.09L1227.2 776.86L1227.9 776.62L1228.5 776.38L1229.2 776.14L1229.9 775.90L1230.5 775.65L1231.2 775.40L1231.9 775.15L1232.5 774.90L1233.2 774.64L1233.9 774.38L1234.6 774.12L1235.2 773.86L1235.9 773.59L1236.6 773.33L1237.2 773.06L1237.9 772.79L1238.6 772.51L1239.2 772.24L1239.9 771.97L1240.6 771.69L1241.2 771.41L1241.9 771.13L1242.6 770.85L1243.3 770.57L1243.9 770.28L1244.6 770.00L1245.3 769.71L1245.9 769.43L1246.6 769.14L1247.3 768.86L1247.9 768.57L1248.6 768.28L1249.3 767.99L1249.9 767.70L1250.6 767.41L1251.3 767.12L1251.9 766.84L1252.6 766.55L1253.3 766.26L1254.0 765.97L1254.6 765.68L1255.3 765.39L1256.0 765.11L1256.6 764.82L1257.3 764.54L1258.0 764.25L1258.6 763.97L1259.3 763.68L1260.0 763.40L1260.6 763.12L1261.3 762.84L1262.0 762.56L1262.7 762.28L1263.3 762.01L1264.0 761.74L1264.7 761.46L1265.3 761.19L1266.0 760.92L1266.7 760.66L1267.3 760.39L1268.0 760.13L1268.7 759.87L1269.3 759.61L1270.0 759.35L1270.7 759.10L1271.3 758.85L1272.0 758.60L1272.7 758.35L1273.4 758.11L1274.0 757.87L1274.7 757.63L1275.4 757.39L1276.0 757.16L1276.7 756.93L1277.4 756.71L1278.0 756.48L1278.7 756.26L1279.4 756.05L1280.0 755.83L1280.7 755.62L1281.4 755.42L1282.1 755.22L1282.7 755.02L1283.4 754.82L1284.1 754.63L1284.7 754.44L1285.4 754.26L1286.1 754.08L1286.7 753.90L1287.4 753.73L1288.1 753.56L1288.7 753.40L1289.4 753.24L1290.1 753.09L1290.8 752.93L1291.4 752.79L1292.1 752.65L1292.8 752.51L1293.4 752.37L1294.1 752.25L1294.8 752.12L1295.4 752.00L1296.1 751.89L1296.8 751.78L1297.4 751.67L1298.1 751.57L1298.8 751.47L1299.4 751.38L1300.1 751.29L1300.8 751.21L1301.5 751.13L1302.1 751.06L1302.8 750.99L1303.5 750.93L1304.1 750.87L1304.8 750.82L1305.5 750.77L1306.1 750.73L1306.8 750.69L1307.5 750.66L1308.1 750.63L1308.8 750.61L1309.5 750.59L1310.2 750.58L1310.8 750.57L1311.5 750.57L1312.2 750.57L1312.8 750.58L1313.5 750.59L1314.2 750.61L1314.8 750.63L1315.5 750.66L1316.2 750.69L1316.8 750.73L1317.5 750.77L1318.2 750.82L1318.8 750.87L1319.5 750.93L1320.2 750.99L1320.9 751.06L1321.5 751.13L1322.2 751.21L1322.9 751.29L1323.5 751.38L1324.2 751.47L1324.9 751.57L1325.5 751.67L1326.2 751.78L1326.9 751.89L1327.5 752.00L1328.2 752.12L1328.9 752.25L1329.6 752.37L1330.2 752.51L1330.9 752.65L1331.6 752.79L1332.2 752.93L1332.9 753.09L1333.6 753.24L1334.2 753.40L1334.9 753.56L1335.6 753.73L1336.2 753.90L1336.9 754.08L1337.6 754.26L1338.2 754.44L1338.9 754.63L1339.6 754.82L1340.3 755.02L1340.9 755.22L1341.6 755.42L1342.3 755.62L1342.9 755.83L1343.6 756.05L1344.3 756.26L1344.9 756.48L1345.6 756.71L1346.3 756.93L1346.9 757.16L1347.6 757.39L1348.3 757.63L1349.0 757.87L1349.6 758.11L1350.3 758.35L1351.0 758.60L1351.6 758.85L1352.3 759.10L1353.0 759.35L1353.6 759.61L1354.3 759.87L1355.0 760.13L1355.6 760.39L1356.3 760.66L1357.0 760.92L1357.7 761.19L1358.3 761.46L1359.0 761.74L1359.7 762.01L1360.3 762.28L1361.0 762.56L1361.7 762.84L1362.3 763.12L1363.0 763.40L1363.7 763.68L1364.3 763.97L1365.0 764.25L1365.7 764.54L1366.3 764.82L1367.0 765.11L1367.7 765.39L1368.4 765.68L1369.0 765.97L1369.7 766.26L1370.4 766.55L1371.0 766.84L1371.7 767.12L1372.4 767.41L1373.0 767.70L1373.7 767.99L1374.4 768.28L1375.0 768.57L1375.7 768.86L1376.4 769.14L1377.1 769.43L1377.7 769.71L1378.4 770.00L1379.1 770.28L1379.7 770.57L1380.4 770.85L1381.1 771.13L1381.7 771.41L1382.4 771.69L1383.1 771.97L1383.7 772.24L1384.4 772.51L1385.1 772.79L1385.7 773.06L1386.4 773.33L1387.1 773.59L1387.8 773.86L1388.4 774.12L1389.1 774.38L1389.8 774.64L1390.4 774.90L1391.1 775.15L1391.8 775.40L1392.4 775.65L1393.1 775.90L1393.8 776.14L1394.4 776.38L1395.1 776.62L1395.8 776.86L1396.5 777.09L1397.1 777.32L1397.8 777.54L1398.5 777.77L1399.1 777.99L1399.8 778.20L1400.5 778.42L1401.1 778.63L1401.8 778.83L1402.5 779.03L1403.1 779.23L1403.8 779.43L1404.5 779.62L1405.1 779.81L1405.8 779.99L1406.5 780.17L1407.2 780.35L1407.8 780.52L1408.5 780.69L1409.2 780.85L1409.8 781.01L1410.5 781.16L1411.2 781.32L1411.8 781.46L1412.5 781.60L1413.2 781.74L1413.8 781.88L1414.5 782.00L1415.2 782.13L1415.9 782.25L1416.5 782.36L1417.2 782.47L1417.9 782.58L1418.5 782.68L1419.2 782.78L1419.9 782.87L1420.5 782.96L1421.2 783.04L1421.9 783.12L1422.5 783.19L1423.2 783.26L1423.9 783.32L1424.6 783.38L1425.2 783.43L1425.9 783.48L1426.6 783.52L1427.2 783.56L1427.9 783.59L1428.6 783.62L1429.2 783.64L1429.9 783.66L1430.6 783.67L1431.2 783.68L1431.9 783.68L1432.6 783.68L1433.2 783.67L1433.9 783.66L1434.6 783.64L1435.3 783.62L1435.9 783.59L1436.6 783.56L1437.3 783.52L1437.9 783.48" stroke="#4285f4" stroke-width="2.7" fill="none" stroke-linejoin="round"/>
</svg>
<div class="a b" style="left:660px;width:805.3px;text-align:center;top:463.5px;font-size:26.8px;line-height:32px;color:#000">Throttle VS. Time (s)</div>
<div class="ax r" style="right:838.6px;top:510.30px">2000</div>
<div class="ax r" style="right:838.6px;top:593.07px">1750</div>
<div class="ax r" style="right:838.6px;top:675.85px">1500</div>
<div class="ax r" style="right:838.6px;top:758.62px">1250</div>
<div class="ax r" style="right:838.6px;top:841.40px">1000</div>
<div class="ax" style="left:729.60px;width:80px;text-align:center;top:856.5px">0</div>
<div class="ax" style="left:863.40px;width:80px;text-align:center;top:856.5px">200</div>
<div class="ax" style="left:997.20px;width:80px;text-align:center;top:856.5px">400</div>
<div class="ax" style="left:1131.00px;width:80px;text-align:center;top:856.5px">600</div>
<div class="ax" style="left:1264.80px;width:80px;text-align:center;top:856.5px">800</div>
<div class="ax" style="left:1044px;width:120px;text-align:center;top:897.4px">Time (s)</div>
<div class="ax" style="left:633.2px;width:120px;text-align:center;top:683.6px;transform:rotate(-90deg)">Throttle</div>
<div class="a" style="left:0;top:980.9px;width:1600px;height:17.200000000000045px;background:#fff"></div>
<div class="a" style="left:0;top:980.9px;width:59.2px;height:17.200000000000045px;background:#f8f8f8;border-right:1.6px solid #d8dad9"></div>
<div class="a" style="left:62.9px;top:982.3px;width:862px;height:11.7px;border-radius:6px;background:#dadce0"></div>
<div class="a" style="left:0;top:996.9px;width:1600px;height:48px;background:#f9fbfd;border-top:1.2px solid #e4e6e9"></div>
<div class="a" style="left:177.5px;top:998.5px;width:270.5px;height:46px;background:#e1e9f7"></div>
<div class="tab b" style="left:193.80px;color:#0b57d0;font-size:18.6px;letter-spacing:0.807px">Sine/Chirp Generation</div>
<div class="tab" style="left:465.70px;color:#444746;font-size:18.6px;letter-spacing:1.178px">Chirp Data for Export</div>
<div class="tab" style="left:723.90px;color:#444746;font-size:18.6px;letter-spacing:0.931px">Sine Wave Data for Export</div>
<svg width="1600" height="1044" viewBox="0 0 1600 1044">
<g fill="none" stroke="#ff2600" stroke-width="2.6">
<rect x="182.5" y="1007.1" width="264.7" height="35"/>
<rect x="713.1" y="1007.1" width="284.4" height="34.2"/>
</g>
<g fill="none" stroke="#444746" stroke-width="1.9">
<path d="M73.6 1023.700H87.600M80.600 1016.700V1030.700"/>
<path d="M125 1019.600H144M125 1023.700H144M125 1027.800H144" stroke-width="1.800"/>
</g>
<path d="M422.900 1021.200h10.200l-5.100 5.200z" fill="#0b57d0"/>
<path d="M680 1020.800h10l-5 5.200z" fill="#444746"/>
<path d="M981.300 1020.800h10l-5 5.200z" fill="#444746"/>
</svg>
</div></body></html>
